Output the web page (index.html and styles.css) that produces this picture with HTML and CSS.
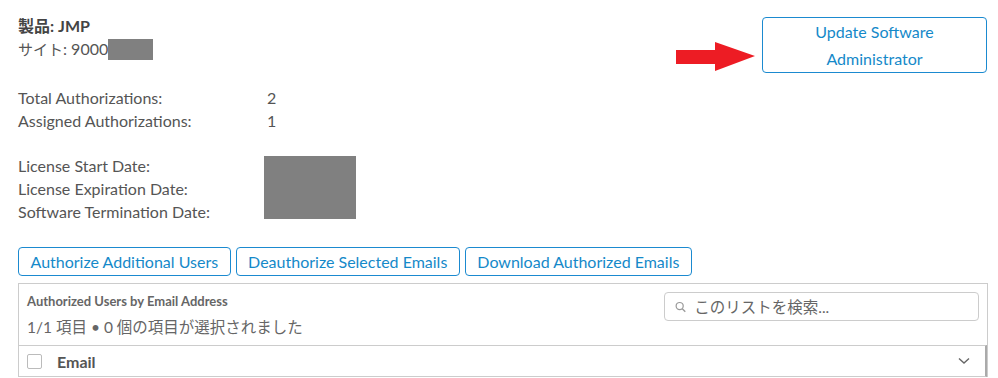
FILE: index.html
```html
<!DOCTYPE html>
<html lang="ja">
<head>
    <meta charset="UTF-8">
    <meta name="viewport" content="width=device-width, initial-scale=1.0">
    <title>License Details</title>
    <link rel="stylesheet" href="styles.css">
</head>
<body>
    <div class="page">
        <div class="top">
            <div class="info">
                <p class="product">製品: JMP</p>
                <p class="site"><span class="cjk">サイト</span>: 9000<span class="redact redact-site"></span></p>

                <div class="grid counts">
                    <span>Total Authorizations:</span><span>2</span>
                    <span>Assigned Authorizations:</span><span>1</span>
                </div>

                <div class="grid dates">
                    <span>License Start Date:</span>
                    <span class="redact redact-dates"></span>
                    <span>License Expiration Date:</span>
                    <span>Software Termination Date:</span>
                </div>
            </div>

            <div class="admin">
                <svg class="arrow" width="80" height="30" viewBox="0 0 80 30">
                    <polygon points="0,8 39,8 39,0 79,14 39,29 39,22 0,22" fill="#ed1c24"/>
                </svg>
                <button class="button button-big">Update Software<br>Administrator</button>
            </div>
        </div>

        <div class="actions">
            <button class="button">Authorize Additional Users</button>
            <button class="button">Deauthorize Selected Emails</button>
            <button class="button">Download Authorized Emails</button>
        </div>

        <div class="panel">
            <div class="panel-head">
                <div>
                    <h2 class="panel-title">Authorized Users by Email Address</h2>
                    <p class="panel-count">1/1 項目 • 0 個の項目が選択されました</p>
                </div>
                <label class="search">
                    <svg width="12" height="12" viewBox="0 0 12 12">
                        <circle cx="5" cy="5" r="3.8" fill="none" stroke="#999" stroke-width="1.3"/>
                        <line x1="7.8" y1="7.8" x2="11" y2="11" stroke="#999" stroke-width="1.4"/>
                    </svg>
                    <input type="text" placeholder="このリストを検索...">
                </label>
            </div>
            <div class="table-head">
                <span class="checkbox"></span>
                <span class="col-email">Email</span>
                <svg class="chevron" width="12" height="8" viewBox="0 0 12 8">
                    <polyline points="1,1.5 6,6 11,1.5" fill="none" stroke="#666" stroke-width="1.4"/>
                </svg>
            </div>
        </div>
    </div>
</body>
</html>
```

FILE: styles.css
```css
/* Reset */
* {
    box-sizing: border-box;
    margin: 0;
    padding: 0;
}

body {
    font-family: Lato, 'Noto Sans CJK JP', sans-serif;
    font-size: 16px;
    line-height: 23px;
    color: #555;
    background-color: #fff;
}

.page {
    padding: 14px 11px 0 18px;
}

/* Top section */
.top {
    display: flex;
    justify-content: space-between;
    align-items: flex-start;
}

.product {
    font-weight: bold;
    color: #444;
}

.site {
    height: 23px;
}

.cjk {
    font-size: 15px;
    line-height: 15px;
}

.redact {
    display: inline-block;
    background-color: #808080;
}

.redact-site {
    width: 45px;
    height: 21px;
    vertical-align: -5px;
}

.grid {
    display: grid;
    grid-template-columns: 246px auto;
}

.counts {
    margin-top: 26px;
}

.counts span:nth-child(even) {
    padding-left: 3px;
}

.dates {
    margin-top: 22px;
}

.redact-dates {
    grid-column: 2;
    grid-row: 1 / span 3;
    width: 92px;
    height: 63px;
    margin-top: 2px;
}

.admin {
    display: flex;
    align-items: flex-start;
    gap: 6px;
    margin-top: 3px;
}

.arrow {
    margin-top: 25px;
}

/* Buttons */
.button {
    font-family: inherit;
    font-size: 16px;
    color: #1589c9;
    background-color: #fff;
    border: 1px solid #1b8ad0;
    border-radius: 4px;
    height: 29px;
    padding: 0 11.5px;
    cursor: pointer;
}

.button-big {
    width: 225px;
    height: 56px;
    line-height: 27px;
}

.actions {
    display: flex;
    gap: 5px;
    margin-top: 24px;
}

/* Panel */
.panel {
    margin-top: 7px;
    border: 1px solid #ccc;
    border-bottom: none;
    width: 970px;
}

.panel-head {
    display: flex;
    justify-content: space-between;
    padding: 8px 8px 0 8px;
    height: 61px;
}

.panel-title {
    font-size: 13px;
    font-weight: bold;
    line-height: 18px;
    color: #666;
}

.panel-count {
    margin-top: 6px;
    font-size: 15.5px;
    color: #666;
}

.search {
    display: flex;
    align-items: center;
    gap: 8px;
    width: 315px;
    height: 29px;
    border: 1px solid #ccc;
    border-radius: 4px;
    padding: 0 10px;
}

.search input {
    border: none;
    outline: none;
    font-family: inherit;
    font-size: 15.5px;
    width: 100%;
    color: #555;
}

.search input::placeholder {
    color: #666;
}

.table-head {
    display: flex;
    align-items: center;
    height: 32px;
    border-top: 1px solid #ccc;
    border-bottom: 1px solid #ccc;
    border-right: 2px solid #aaa;
    padding: 0 15px 0 8px;
}

.checkbox {
    width: 15px;
    height: 15px;
    border: 1px solid #bbb;
    border-radius: 2px;
}

.col-email {
    font-weight: bold;
    color: #555;
    margin-left: 15px;
    flex: 1;
}
```
